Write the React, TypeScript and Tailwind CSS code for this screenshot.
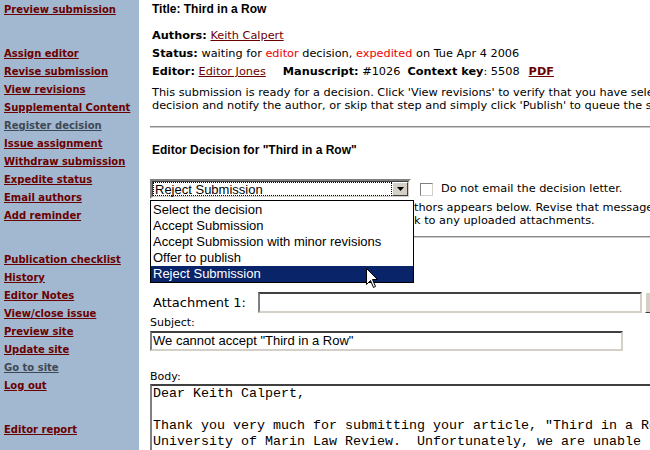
const verdana = { fontFamily: '"DejaVu Sans", Verdana, sans-serif' };
const arial = { fontFamily: '"Liberation Sans", Arial, sans-serif' };

const navTop = [
  { label: "Assign editor" },
  { label: "Revise submission" },
  { label: "View revisions" },
  { label: "Supplemental Content" },
  { label: "Register decision", muted: true },
  { label: "Issue assignment" },
  { label: "Withdraw submission" },
  { label: "Expedite status" },
  { label: "Email authors" },
  { label: "Add reminder" },
];

const navBottom = [
  { label: "Publication checklist" },
  { label: "History" },
  { label: "Editor Notes" },
  { label: "View/close issue" },
  { label: "Preview site" },
  { label: "Update site" },
  { label: "Go to site", muted: true },
  { label: "Log out" },
];

const options = [
  "Select the decision",
  "Accept Submission",
  "Accept Submission with minor revisions",
  "Offer to publish",
  "Reject Submission",
];

function NavLink({ label, muted }: { label: string; muted?: boolean }) {
  return (
    <a
      href="#"
      className={
        "block h-[18px] whitespace-nowrap text-[10px] font-bold leading-[18px] underline " +
        (muted ? "text-[#3e4854]" : "text-[#6b0000]")
      }
    >
      {label}
    </a>
  );
}

function Sidebar() {
  return (
    <div className="flex w-[139px] shrink-0 flex-col bg-[#a2b8d0] pt-px pl-[4px]" style={verdana}>
      <NavLink label="Preview submission" />
      <div className="mt-[26px]">
        {navTop.map((n) => (
          <NavLink key={n.label} {...n} />
        ))}
      </div>
      <div className="mt-[26px]">
        {navBottom.map((n) => (
          <NavLink key={n.label} {...n} />
        ))}
      </div>
      <div className="mt-[26px]">
        <NavLink label="Editor report" />
      </div>
    </div>
  );
}

function Rule() {
  return <div className="h-[2px] w-[520px] border-t border-b border-t-[#8a8a8a] border-b-[#c9c9c9]" />;
}

function Cursor() {
  return (
    <svg width="13" height="22" viewBox="0 0 13 22" className="absolute left-[215px] top-[67px]">
      <polygon
        points="0.5,0.5 0.5,16.5 4.5,12.5 7.5,19.5 9.5,18.5 6.5,11.5 11.5,11.5"
        fill="#fff"
        stroke="#000"
        strokeWidth="1"
      />
    </svg>
  );
}

function DecisionSelect() {
  return (
    <div className="relative w-[261px] shrink-0">
      <div className="flex h-[20px] border-2 border-t-[#808080] border-l-[#808080] border-b-[#ffffff] border-r-[#ffffff]">
        <div className="flex flex-1 border border-t-[#404040] border-l-[#404040] border-b-[#d4d0c8] border-r-[#d4d0c8] bg-white">
          <div
            className="flex flex-1 items-center border border-dotted border-black pl-[1px] text-[13px] leading-none text-black"
            style={arial}
          >
            Reject Submission
          </div>
          <div className="flex w-[16px] items-center justify-center border border-t-white border-l-white border-b-[#404040] border-r-[#404040] bg-[#d4d0c8]">
            <svg width="7" height="4" viewBox="0 0 7 4">
              <polygon points="0,0 7,0 3.5,4" fill="#000" />
            </svg>
          </div>
        </div>
      </div>
      <div
        className="absolute left-0 top-[21px] z-10 w-[264px] border border-black bg-white pt-px text-[13px] text-black"
        style={arial}
      >
        {options.map((o, i) => (
          <div
            key={o}
            className={
              "h-[16px] whitespace-nowrap pl-[2px] leading-[16px] " +
              (i === options.length - 1 ? "bg-[#0a246a] text-white" : "")
            }
          >
            {o}
          </div>
        ))}
        <Cursor />
      </div>
    </div>
  );
}

const inset = "border-2 border-t-[#404040] border-l-[#808080] border-b-[#d4d0c8] border-r-[#d4d0c8] bg-white";

export default function App() {
  return (
    <div className="flex h-[450px] w-[650px] overflow-hidden bg-white text-black">
      <Sidebar />
      <div className="flex min-w-0 flex-1 flex-col pl-[11px]">
        <div className="h-[18px] whitespace-nowrap pl-[2px] text-[12px] font-bold leading-[18px]" style={arial}>
          Title: Third in a Row
        </div>

        <div className="whitespace-nowrap pl-[2px] text-[11.3px]" style={verdana}>
          <div className="mt-[9px] h-[18px] leading-[18px]">
            <b>Authors:</b>{" "}
            <a href="#" className="text-[#6b0000] underline">
              Keith Calpert
            </a>
          </div>
          <div className="h-[18px] leading-[18px]">
            <b>Status:</b> waiting for <span className="text-[#ee0000]">editor</span> decision,{" "}
            <span className="text-[#ee0000]">expedited</span> on Tue Apr 4 2006
          </div>
          <div className="flex h-[18px] gap-[17px] leading-[18px]">
            <span>
              <b>Editor:</b>{" "}
              <a href="#" className="text-[#6b0000] underline">
                Editor Jones
              </a>
            </span>
            <span className="flex gap-[7px]">
              <span>
                <b>Manuscript:</b> #1026
              </span>
              <span>
                <b>Context key</b>: 5508
              </span>
              <a href="#" className="ml-[2px] font-bold text-[#6b0000] underline">
                PDF
              </a>
            </span>
          </div>
          <div className="mt-[5px] leading-[13px]">
            <div>
              This submission is ready for a decision. Click 'View revisions' to verify that you have selected the
              correct version, then record the
            </div>
            <div>
              decision and notify the author, or skip that step and simply click 'Publish' to queue the submission.
            </div>
          </div>
        </div>

        <div className="mt-[14px]">
          <Rule />
        </div>

        <div
          className="mt-[13px] h-[18px] whitespace-nowrap pl-[2px] text-[12px] font-bold leading-[18px]"
          style={arial}
        >
          Editor Decision for "Third in a Row"
        </div>

        <div className="mt-[20px] flex items-center whitespace-nowrap text-[11.3px]" style={verdana}>
          <DecisionSelect />
          <span className="ml-[9px] h-[13px] w-[13px] shrink-0 border border-t-[#808080] border-l-[#808080] border-b-[#d4d0c8] border-r-[#d4d0c8] bg-white" />
          <span className="ml-[8px]">Do not email the decision letter.</span>
        </div>

        <div className="mt-[2px] whitespace-nowrap pl-[2px] text-[11.3px] leading-[13px]" style={verdana}>
          <div>
            <span className="inline-block w-[262px] overflow-hidden align-bottom">The message sent to the au</span>
            thors appears below. Revise that message as needed.
          </div>
          <div>
            <span className="inline-block w-[262px] overflow-hidden align-bottom">You may also include a lin</span>k to
            any uploaded attachments.
          </div>
        </div>

        <div className="mt-[9px]">
          <Rule />
        </div>

        <div className="mt-[54px] flex items-center whitespace-nowrap">
          <span className="w-[108px] shrink-0 pl-[3px] text-[13px]" style={verdana}>
            Attachment 1:
          </span>
          <div className={"h-[21px] w-[384px] shrink-0 " + inset} />
          <div className="ml-[3px] h-[21px] w-[40px] shrink-0 border border-t-white border-l-white border-b-[#404040] border-r-[#404040] bg-[#d4d0c8]" />
        </div>

        <div className="mt-[3px] h-[14px] text-[11px] leading-[14px]" style={verdana}>
          Subject:
        </div>
        <div
          className={"mt-[1px] flex h-[20px] w-[473px] items-center whitespace-nowrap pl-px text-[13px] " + inset}
          style={arial}
        >
          We cannot accept "Third in a Row"
        </div>

        <div className="mt-[19px] h-[14px] text-[11px] leading-[14px]" style={verdana}>
          Body:
        </div>
        <div
          className={"h-[120px] w-[520px] shrink-0 whitespace-pre pl-[1px] text-[13.33px] leading-[16px] " + inset}
          style={{ fontFamily: '"Liberation Mono", "Courier New", monospace' }}
        >
          {`Dear Keith Calpert,

Thank you very much for submitting your article, "Third in a Row" to the
University of Marin Law Review.  Unfortunately, we are unable to accept it.`}
        </div>
      </div>
    </div>
  );
}
